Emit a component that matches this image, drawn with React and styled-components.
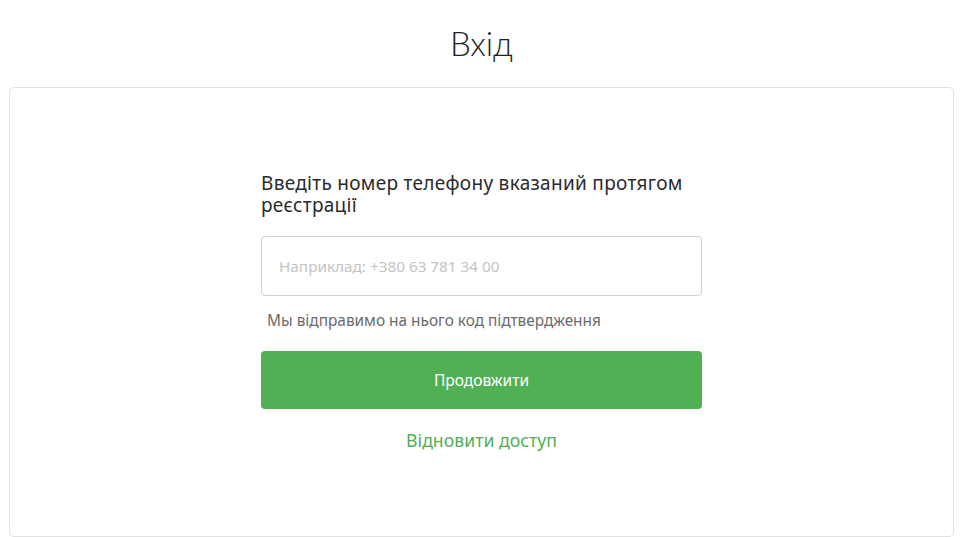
import styled, { createGlobalStyle } from "styled-components";

const GlobalStyle = createGlobalStyle`
  body {
    margin: 0;
    background: #ffffff;
    font-family: "Noto Sans", sans-serif;
  }
`;

const App = () => {
  return (
    <Page>
      <GlobalStyle />
      <Title>Вхід</Title>
      <Card>
        <Form onSubmit={(e) => e.preventDefault()}>
          <Heading>Введіть номер телефону вказаний протягом реєстрації</Heading>
          <PhoneInput type="tel" placeholder="Наприклад: +380 63 781 34 00" />
          <Hint>Мы відправимо на нього код підтвердження</Hint>
          <SubmitButton type="submit">Продовжити</SubmitButton>
          <RestoreLink href="#">Відновити доступ</RestoreLink>
        </Form>
      </Card>
    </Page>
  );
};

const Page = styled.div`
  display: flex;
  flex-direction: column;
  padding: 0 9px;
  min-height: 537px;
  box-sizing: border-box;
`;

const Title = styled.h1`
  margin: 0;
  height: 87px;
  display: flex;
  align-items: center;
  justify-content: center;
  padding-bottom: 2px;
  box-sizing: border-box;
  font-family: "Lato", "Noto Sans", sans-serif;
  font-weight: 300;
  font-size: 33px;
  color: #222222;
`;

const Card = styled.div`
  flex: 1;
  border: 1px solid #e2e2e2;
  border-radius: 5px;
  display: flex;
  justify-content: center;
  padding-top: 84px;
`;

const Form = styled.form`
  width: 441px;
  display: flex;
  flex-direction: column;
`;

const Heading = styled.p`
  margin: 0 0 20px;
  font-size: 19px;
  line-height: 22px;
  letter-spacing: 0.3px;
  color: #2b2b2b;
`;

const PhoneInput = styled.input`
  height: 60px;
  box-sizing: border-box;
  border: 1px solid #cfcfcf;
  border-radius: 4px;
  padding: 0 17px;
  font-family: "Noto Sans", sans-serif;
  font-size: 15.3px;
  color: #333;
  outline: none;

  &::placeholder {
    color: #c4c4c4;
  }
`;

const Hint = styled.p`
  margin: 15px 0 0 6px;
  font-size: 15.4px;
  line-height: 20px;
  color: #6b6b6b;
`;

const SubmitButton = styled.button`
  margin-top: 20px;
  height: 58px;
  border: none;
  border-radius: 4px;
  background: #51af54;
  color: #ffffff;
  font-family: "Noto Sans", sans-serif;
  font-size: 15.5px;
  font-weight: 400;
  cursor: pointer;
`;

const RestoreLink = styled.a`
  margin-top: 20px;
  align-self: center;
  font-size: 17.7px;
  line-height: 22px;
  color: #51af54;
  text-decoration: none;
`;

export default App;
